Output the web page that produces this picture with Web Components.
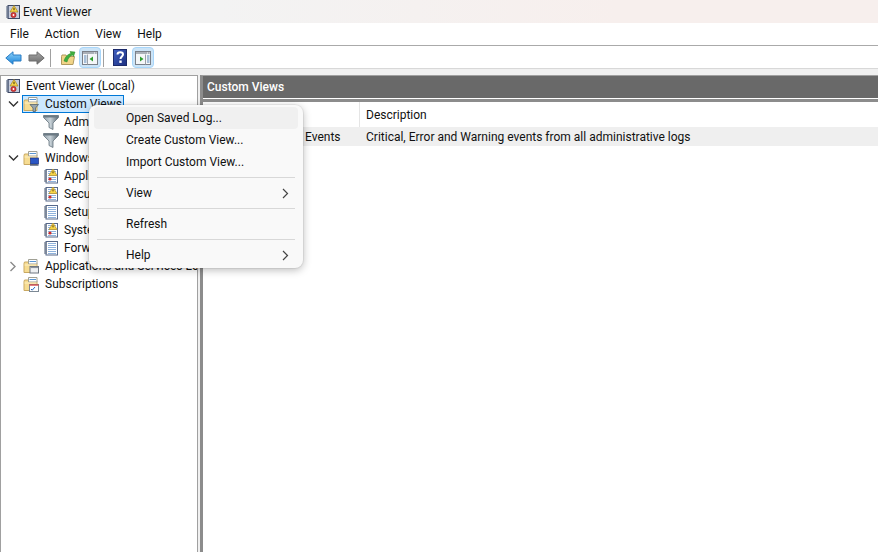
<!DOCTYPE html>
<html>
<head>
<meta charset="utf-8">
<title>Event Viewer</title>
<style>
  html, body { margin: 0; height: 100%; overflow: hidden; background: #fff; }
  body { font: 12px Roboto, "Noto Sans", sans-serif; color: #111; }
</style>
</head>
<body>
<ev-app>
  <ev-titlebar slot="title">Event Viewer</ev-titlebar>
  <ev-menubar slot="menu">
    <span>File</span><span>Action</span><span>View</span><span>Help</span>
  </ev-menubar>
  <ev-toolbar slot="tools">
    <ev-tool icon="back"></ev-tool>
    <ev-tool icon="forward"></ev-tool>
    <ev-tool sep></ev-tool>
    <ev-tool icon="open"></ev-tool>
    <ev-tool icon="paneleft" active></ev-tool>
    <ev-tool sep></ev-tool>
    <ev-tool icon="help"></ev-tool>
    <ev-tool icon="paneright" active></ev-tool>
  </ev-toolbar>
  <ev-tree slot="tree">
    <ev-tree-item root label="Event Viewer (Local)" icon="viewer">
      <ev-tree-item label="Custom Views" icon="folder-filter" open selected>
        <ev-tree-item label="Administrative Events" icon="filter"></ev-tree-item>
        <ev-tree-item label="New Custom View" icon="filter"></ev-tree-item>
      </ev-tree-item>
      <ev-tree-item label="Windows Logs" icon="folder-pc" open>
        <ev-tree-item label="Application" icon="log-warn"></ev-tree-item>
        <ev-tree-item label="Security" icon="log-warn"></ev-tree-item>
        <ev-tree-item label="Setup" icon="log"></ev-tree-item>
        <ev-tree-item label="System" icon="log-warn"></ev-tree-item>
        <ev-tree-item label="Forwarded Events" icon="log"></ev-tree-item>
      </ev-tree-item>
      <ev-tree-item label="Applications and Services Logs" icon="folder-win" closed></ev-tree-item>
      <ev-tree-item label="Subscriptions" icon="folder-cal"></ev-tree-item>
    </ev-tree-item>
  </ev-tree>
  <ev-details slot="details" heading="Custom Views">
    <ev-list-row header name="Name" desc="Description"></ev-list-row>
    <ev-list-row shaded icon="filter" name="Administrative Events" desc="Critical, Error and Warning events from all administrative logs"></ev-list-row>
  </ev-details>
  <ev-context-menu slot="overlay">
    <ev-menu-item hot>Open Saved Log...</ev-menu-item>
    <ev-menu-item>Create Custom View...</ev-menu-item>
    <ev-menu-item>Import Custom View...</ev-menu-item>
    <ev-menu-sep></ev-menu-sep>
    <ev-menu-item sub>View</ev-menu-item>
    <ev-menu-sep></ev-menu-sep>
    <ev-menu-item>Refresh</ev-menu-item>
    <ev-menu-sep></ev-menu-sep>
    <ev-menu-item sub>Help</ev-menu-item>
  </ev-context-menu>
</ev-app>

<script>
// little 16x16 drawings, all hand made to look like the mmc ones
const logBase = `
  <rect x="3" y="1.500" width="11.500" height="13.500" fill="#fff" stroke="#56688a"/>
  <path d="M5 3.500h8M5 5.500h8M5 7.500h8M5 9.500h8M5 11.500h8M5 13.500h8" stroke="#8fb2dc"/>
  <path d="M1 3h3M1 5h3M1 7h3M1 9h3M1 11h3M1 13h3" stroke="#4e5c72"/>`;
const warnMark = `
  <path d="M10 1 L14 7.500 H6Z" fill="#f8d648" stroke="#b8922a" stroke-width=".7"/>
  <path d="M10 3.200v2.200" stroke="#5a4310"/>
  <circle cx="7" cy="11" r="1.600" fill="#d02c2c"/>`;
const folderBase = `
  <path d="M1 5.500V14.500H14V5.500H6.500L5.500 4H1.500Z" fill="#f6dc92" stroke="#c9a962"/>
  <path d="M5.500 1.500H14V6H5.500Z" fill="#fff" stroke="#a0a094"/>
  <path d="M6.500 3.500h6.500" stroke="#5a96d4"/>
  <path d="M1.500 7H13.500" stroke="#fcefc4"/>`;
const ICONS = {
  back: `<svg width="17" height="16" viewBox="0 0 17 16"><defs><linearGradient id="b" x1="0" y1="0" x2="0" y2="1"><stop offset="0" stop-color="#8fd4fb"/><stop offset="1" stop-color="#1a82d8"/></linearGradient></defs><path d="M.8 8 8 1.800V5H16V11H8V14.200Z" fill="url(#b)" stroke="#2a7cc4"/></svg>`,
  forward: `<svg width="17" height="16" viewBox="0 0 17 16"><defs><linearGradient id="f" x1="0" y1="0" x2="0" y2="1"><stop offset="0" stop-color="#a8a8a8"/><stop offset="1" stop-color="#6a6a6a"/></linearGradient></defs><path d="M16.200 8 9 1.800V5H1V11H9V14.200Z" fill="url(#f)" stroke="#6e6e6e"/></svg>`,
  open: `<svg width="16" height="16" viewBox="0 0 16 16"><path d="M1.500 6.500V14.500H13L14.500 6.500H7L6 5H2Z" fill="#f0d488" stroke="#b09a60"/><path d="M4 11C5 7 8 4 11 3.500L10 1.500 15 2 13.500 6.500 12.500 5C10 6 8 8 7 12Z" fill="#3fae3f" stroke="#2b8a2b" stroke-width=".5"/></svg>`,
  paneleft: `<svg width="16" height="14" viewBox="0 0 16 14"><rect x=".5" y=".5" width="15" height="13" fill="#f4f6f8" stroke="#7a7f88"/><path d="M1 1h14v2H1Z" fill="#aab0b8"/><path d="M12 2h1M14 2h.5" stroke="#fff"/><path d="M5.500 3.500V13.500" stroke="#9aa0a8"/><path d="M2 5h2.500M2 7h2.500M2 9h2.500M2 11h2.500" stroke="#5a88b8"/><path d="M11 5.500V10.500L7.500 8Z" fill="#2e9e2e"/></svg>`,
  paneright: `<svg width="16" height="14" viewBox="0 0 16 14"><rect x=".5" y=".5" width="15" height="13" fill="#f4f6f8" stroke="#7a7f88"/><path d="M1 1h14v2H1Z" fill="#aab0b8"/><path d="M12 2h1M14 2h.5" stroke="#fff"/><path d="M10.500 3.500V13.500" stroke="#9aa0a8"/><path d="M12 5h2.500M12 7h2.500M12 9h2.500M12 11h2.500" stroke="#5a88b8"/><path d="M5 5.500V10.500L8.500 8Z" fill="#2e9e2e"/></svg>`,
  help: `<svg width="14" height="17" viewBox="0 0 14 17"><defs><linearGradient id="h" x1="0" y1="0" x2="1" y2="1"><stop offset="0" stop-color="#3f5fc0"/><stop offset="1" stop-color="#1c2f80"/></linearGradient></defs><rect x=".5" y=".5" width="13" height="16" fill="url(#h)" stroke="#1c2a6a"/><path d="M4.500 5.500C4.500 2.500 10 2.500 10 5.500 10 7.500 7.500 7.500 7.500 10" fill="none" stroke="#fff" stroke-width="2"/><rect x="6.300" y="11.500" width="2.400" height="2.400" fill="#fff"/></svg>`,
  viewer: `<svg width="16" height="16" viewBox="0 0 16 16"><rect x="3" y="1.500" width="11.500" height="13" fill="#c6ccdc" stroke="#3f4a66"/><path d="M1 3h3M1 5h3M1 7h3M1 9h3M1 11h3M1 13h3" stroke="#4a5a78"/><path d="M9 1.500 13 8H5Z" fill="#f8d648" stroke="#a88520" stroke-width=".7"/><path d="M9 3.800v2.400" stroke="#40300a"/><circle cx="8.500" cy="11" r="2.600" fill="#d83a3a" stroke="#902020" stroke-width=".6"/><circle cx="8.500" cy="11" r=".9" fill="#fff"/></svg>`,
  log: `<svg width="16" height="16" viewBox="0 0 16 16">${logBase}</svg>`,
  "log-warn": `<svg width="16" height="16" viewBox="0 0 16 16">${logBase}${warnMark}</svg>`,
  filter: `<svg width="16" height="16" viewBox="0 0 16 16"><defs><linearGradient id="fl" x1="0" y1="0" x2="1" y2="0"><stop offset="0" stop-color="#93a1ab"/><stop offset=".45" stop-color="#c9d3d9"/><stop offset="1" stop-color="#5c6a74"/></linearGradient></defs><path d="M.5 1.500H15.500V3.500L10 9V15.500L6 13.500V9L.5 3.500Z" fill="url(#fl)" stroke="#66747e" stroke-width=".8"/><path d="M1 2.500H15" stroke="#6c7a84" stroke-width="2"/></svg>`,
  "folder-filter": `<svg width="16" height="16" viewBox="0 0 16 16">${folderBase}<path d="M7 8.500H15.500L12.500 12V15.500H10V12Z" fill="#98a6ae" stroke="#56646e" stroke-width=".8"/></svg>`,
  "folder-pc": `<svg width="16" height="16" viewBox="0 0 16 16">${folderBase}<rect x="7.500" y="8" width="8" height="6" fill="#2a56c4" stroke="#1c2f80" stroke-width=".7"/><path d="M7 15h8.500" stroke="#4a5a78" stroke-width="1.400"/></svg>`,
  "folder-win": `<svg width="16" height="16" viewBox="0 0 16 16">${folderBase}<rect x="7" y="8.500" width="8.500" height="6.500" fill="#eef0f2" stroke="#6e7680"/><path d="M7.500 9.500h7.500" stroke="#8a929c" stroke-width="1.200"/></svg>`,
  "folder-cal": `<svg width="16" height="16" viewBox="0 0 16 16">${folderBase}<rect x="6.500" y="8.500" width="9" height="7" fill="#fff" stroke="#7c8894"/><path d="M6.500 9h9" stroke="#d84a4a" stroke-width="1.400"/><path d="M8 13l1.200 1.200L12 11" fill="none" stroke="#2a6ac4"/></svg>`
};

class EvIcon extends HTMLElement {
  static get observedAttributes() { return ["name"]; }
  constructor() {
    super();
    this.attachShadow({ mode: "open" });
  }
  attributeChangedCallback() {
    this.shadowRoot.innerHTML = `<style>
      :host { display: inline-flex; align-items: center; justify-content: center; flex: none; width: 16px; height: 16px; }
      svg { display: block; flex: none; }
    </style>${ICONS[this.getAttribute("name")] || ""}`;
  }
}

const appTemplate = document.createElement("template");
appTemplate.innerHTML = `
  <style>
    :host { display: flex; flex-direction: column; position: relative; width: 878px; height: 552px; overflow: hidden; }
    .gap { height: 6px; flex: none; background: #f0f0f0; }
    .panes { flex: 1; min-height: 0; display: grid; grid-template-columns: 198px 1fr; column-gap: 2px; background: #f0f0f0; }
  </style>
  <slot name="title"></slot>
  <slot name="menu"></slot>
  <slot name="tools"></slot>
  <div class="gap"></div>
  <div class="panes">
    <slot name="tree"></slot>
    <slot name="details"></slot>
  </div>
  <slot name="overlay"></slot>
`;
class EvApp extends HTMLElement {
  constructor() {
    super();
    this.attachShadow({ mode: "open" });
    this.shadowRoot.appendChild(appTemplate.content.cloneNode(true));
  }
}

class EvTitlebar extends HTMLElement {
  constructor() {
    super();
    this.attachShadow({ mode: "open" });
    this.shadowRoot.innerHTML = `<style>
      :host { display: flex; align-items: center; height: 23px; flex: none; padding-left: 5px; gap: 2px;
        background: linear-gradient(90deg, #f3f3f3 0, #f3f3f3 25%, #f7efed 70%); }
    </style><ev-icon name="viewer"></ev-icon><span><slot></slot></span>`;
  }
}

class EvMenubar extends HTMLElement {
  constructor() {
    super();
    this.attachShadow({ mode: "open" });
    this.shadowRoot.innerHTML = `<style>
      :host { display: flex; align-items: center; gap: 16px; height: 22px; flex: none; padding-left: 10px;
        background: #fff; border-bottom: 1px solid #aaaaaa; }
      ::slotted(span) { display: block; }
    </style><slot></slot>`;
  }
}

class EvToolbar extends HTMLElement {
  constructor() {
    super();
    this.attachShadow({ mode: "open" });
    this.shadowRoot.innerHTML = `<style>
      :host { display: flex; align-items: flex-end; height: 22px; flex: none; padding-left: 2px;
        background: #fff; border-bottom: 1px solid #d8d8d8; }
    </style><slot></slot>`;
  }
}

class EvTool extends HTMLElement {
  connectedCallback() {
    if (this.shadowRoot) return;
    this.attachShadow({ mode: "open" });
    const icon = this.getAttribute("icon");
    this.shadowRoot.innerHTML = `<style>
      :host { display: flex; align-items: center; justify-content: center; width: 23px; height: 21px; box-sizing: border-box; }
      :host([active]) { background: #cce4f7; border: 1px solid #a8d6fa; border-radius: 4px; width: 22px; }
      :host([sep]) { width: 1px; height: 18px; background: #a0a0a0; margin: 0 3px 1px 2px; }
      :host([icon="open"]) { margin-left: 2px; }
      :host([icon="help"]) { margin-left: 1px; margin-right: 1px; }
    </style>${icon ? `<ev-icon name="${icon}"></ev-icon>` : ""}`;
  }
}

class EvTree extends HTMLElement {
  constructor() {
    super();
    this.attachShadow({ mode: "open" });
    this.shadowRoot.innerHTML = `<style>
      :host { display: block; height: 100%; box-sizing: border-box; overflow: hidden; background: #fff;
        border: 1px solid #a0a0a0; border-bottom: 0; padding-top: 1px; }
    </style><slot></slot>`;
  }
}

const treeItemTemplate = document.createElement("template");
treeItemTemplate.innerHTML = `
  <style>
    :host { display: block; white-space: nowrap; }
    .row { display: flex; align-items: center; height: 18px; }
    .twisty { flex: none; width: 21px; height: 18px; display: flex; align-items: center; justify-content: center; box-sizing: border-box; padding-left: 3px; }
    :host([root]) .twisty { width: 3px; padding: 0; }
    .cell { display: flex; align-items: center; height: 18px; box-sizing: border-box; padding: 0 2px 0 1px; }
    .row.sel .cell { background: #cce8ff; outline: 1px solid #0078d7; outline-offset: -1px; }
    .label { margin-left: 5px; }
    :host([icon^="folder"]) .label { margin-left: 6px; }
    .kids { padding-left: 20px; }
    :host([root]) .kids { padding-left: 0; }
  </style>
  <div class="row">
    <span class="twisty"></span>
    <div class="cell"><ev-icon></ev-icon><span class="label"></span></div>
  </div>
  <div class="kids"><slot></slot></div>
`;
class EvTreeItem extends HTMLElement {
  constructor() {
    super();
    this.attachShadow({ mode: "open" });
    this.shadowRoot.appendChild(treeItemTemplate.content.cloneNode(true));
  }
  connectedCallback() {
    const root = this.shadowRoot;
    root.querySelector("ev-icon").setAttribute("name", this.getAttribute("icon"));
    root.querySelector(".label").textContent = this.getAttribute("label");
    if (this.hasAttribute("selected")) root.querySelector(".row").classList.add("sel");
    const twisty = root.querySelector(".twisty");
    if (this.hasAttribute("open")) {
      twisty.innerHTML = `<svg width="11" height="8" viewBox="0 0 11 8"><path d="M1 1.500 5.500 6 10 1.500" fill="none" stroke="#333" stroke-width="1.400"/></svg>`;
    } else if (this.hasAttribute("closed")) {
      twisty.innerHTML = `<svg width="8" height="11" viewBox="0 0 8 11"><path d="M1.500 1 6 5.500 1.500 10" fill="none" stroke="#8a8a8a" stroke-width="1.400"/></svg>`;
    }
  }
}

class EvDetails extends HTMLElement {
  constructor() {
    super();
    this.attachShadow({ mode: "open" });
    this.shadowRoot.innerHTML = `<style>
      :host { display: flex; flex-direction: column; height: 100%; background: #fff; box-sizing: border-box;
        border-left: 3px solid #8c8c8c; border-top: 1px solid #a0a0a0; }
      h2 { margin: 0; height: 22px; flex: none; display: flex; align-items: center; padding-left: 4px;
        background: #696969; color: #fff; font: inherit; font-weight: 500; box-sizing: border-box; }
      .rule { height: 1px; background: #fff; flex: none; }
      .rule2 { height: 3px; background: #8c8c8c; flex: none; }
    </style>
    <h2></h2><div class="rule"></div><div class="rule2"></div>
    <div><slot></slot></div>`;
    this.shadowRoot.querySelector("h2").textContent = this.getAttribute("heading");
  }
}

class EvListRow extends HTMLElement {
  connectedCallback() {
    if (this.shadowRoot) return;
    this.attachShadow({ mode: "open" });
    const icon = this.getAttribute("icon");
    this.shadowRoot.innerHTML = `<style>
      :host { display: grid; grid-template-columns: 157px 1fr; height: 19px; align-items: center; white-space: nowrap; }
      :host([header]) { height: 25px; }
      :host([shaded]) { background: #efefef; }
      .name { display: flex; align-items: center; gap: 5px; padding-left: 1px; height: 100%; box-sizing: border-box; }
      :host([header]) .name { border-right: 1px solid #e5e5e5; padding-left: 4px; }
      .desc { padding-left: 6px; }
    </style>
    <div class="name">${icon ? `<ev-icon name="${icon}"></ev-icon>` : ""}<span></span></div>
    <div class="desc"></div>`;
    this.shadowRoot.querySelector(".name span").textContent = this.getAttribute("name");
    this.shadowRoot.querySelector(".desc").textContent = this.getAttribute("desc");
  }
}

class EvContextMenu extends HTMLElement {
  constructor() {
    super();
    this.attachShadow({ mode: "open" });
    this.shadowRoot.innerHTML = `<style>
      :host { position: absolute; left: 89px; top: 105px; width: 214px; box-sizing: border-box; padding: 2px 0;
        display: block; background: #f9f9f9; border-radius: 8px; box-shadow: 0 2px 8px rgba(0,0,0,.28), 0 0 0 1px rgba(0,0,0,.05); }
    </style><slot></slot>`;
  }
}

class EvMenuItem extends HTMLElement {
  constructor() {
    super();
    this.attachShadow({ mode: "open" });
    this.shadowRoot.innerHTML = `<style>
      :host { display: flex; align-items: center; justify-content: space-between; height: 22px; margin: 0 5px;
        padding: 0 9px 0 32px; border-radius: 4px; }
      :host([hot]) { background: #f0f0f0; }
      svg { display: none; }
      :host([sub]) svg { display: block; }
    </style><span><slot></slot></span>
    <svg width="7" height="11" viewBox="0 0 7 11"><path d="M1 1 5.500 5.500 1 10" fill="none" stroke="#444" stroke-width="1.200"/></svg>`;
  }
}

class EvMenuSep extends HTMLElement {
  constructor() {
    super();
    this.attachShadow({ mode: "open" });
    this.shadowRoot.innerHTML = `<style>
      :host { display: block; height: 1px; margin: 4px 8px; background: #d8d8d8; }
    </style>`;
  }
}

customElements.define("ev-icon", EvIcon);
customElements.define("ev-app", EvApp);
customElements.define("ev-titlebar", EvTitlebar);
customElements.define("ev-menubar", EvMenubar);
customElements.define("ev-toolbar", EvToolbar);
customElements.define("ev-tool", EvTool);
customElements.define("ev-tree", EvTree);
customElements.define("ev-tree-item", EvTreeItem);
customElements.define("ev-details", EvDetails);
customElements.define("ev-list-row", EvListRow);
customElements.define("ev-context-menu", EvContextMenu);
customElements.define("ev-menu-item", EvMenuItem);
customElements.define("ev-menu-sep", EvMenuSep);
</script>
</body>
</html>
